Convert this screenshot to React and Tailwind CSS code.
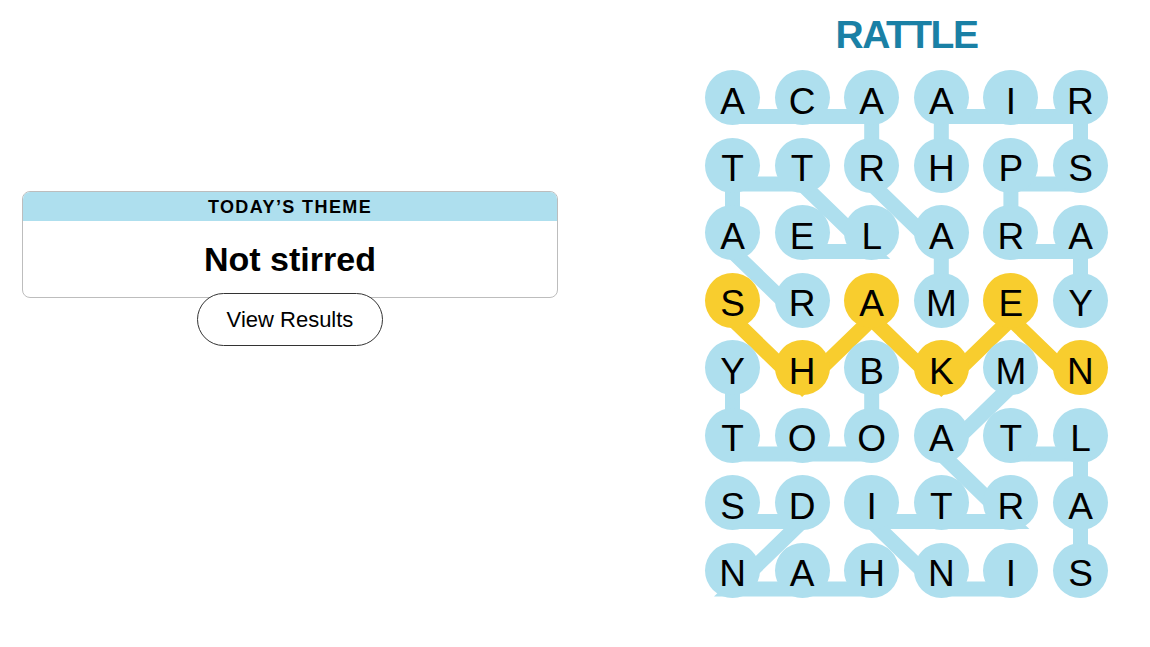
import React from 'react';

const BLUE = '#aedfee';
const YELLOW = '#f8cd2e';

const letters = [
  'ACAAIR',
  'TTRHPS',
  'AELARA',
  'SRAMEY',
  'YHBKMN',
  'TOOATL',
  'SDITRA',
  'NAHNIS',
];

// words as [col,row] chains
const words = [
  { cells: [[3, 3], [3, 2], [2, 1], [2, 0], [1, 0], [0, 0]] },
  { cells: [[3, 1], [3, 0], [4, 0], [5, 0], [5, 1], [4, 1], [4, 2], [5, 2], [5, 3]] },
  { cells: [[1, 3], [0, 2], [0, 1], [1, 1], [2, 2], [1, 2]] },
  { cells: [[2, 4], [2, 5], [1, 5], [0, 5], [0, 4]] },
  { cells: [[4, 4], [3, 5], [4, 6], [3, 6], [2, 6], [3, 7], [4, 7]] },
  { cells: [[5, 7], [5, 6], [5, 5], [4, 5]] },
  { cells: [[2, 7], [1, 7], [0, 7], [1, 6], [0, 6]] },
  { cells: [[0, 3], [1, 4], [2, 3], [3, 4], [4, 3], [5, 4]], spangram: true },
];

const spanCells = new Set(words.find((w) => w.spangram).cells.map(([c, r]) => `${c}-${r}`));

const px = (c) => 27.5 + c * 69.6;
const py = (r) => 27.5 + r * 67.5 + 19;

function Board() {
  return (
    <div className="relative">
      <svg className="absolute left-0 top-0 overflow-visible" width="403" height="528">
        {words.map((w, i) => (
          <polyline
            key={i}
            points={w.cells.map(([c, r]) => `${px(c)},${py(r)}`).join(' ')}
            fill="none"
            stroke={w.spangram ? YELLOW : BLUE}
            strokeWidth="15"
            strokeLinejoin="miter"
            strokeLinecap="butt"
          />
        ))}
      </svg>
      <div className="relative grid grid-cols-[repeat(6,55px)] gap-x-[14.6px] gap-y-[12.5px]">
        {letters.map((row, r) =>
          row.split('').map((ch, c) => (
            <div
              key={`${c}-${r}`}
              className={`flex h-[55px] w-[55px] items-center justify-center rounded-full pt-[7px] text-[37px] leading-none text-black ${
                spanCells.has(`${c}-${r}`) ? 'bg-[#f8cd2e]' : 'bg-[#aedfee]'
              }`}
            >
              {ch}
            </div>
          ))
        )}
      </div>
    </div>
  );
}

export default function App() {
  return (
    <div className="flex min-h-[647px] w-[1150px] bg-white font-['Liberation_Sans',Arial,sans-serif] text-black">
      <div className="w-[705px] shrink-0 pl-[22px] pt-[191px]">
        <div className="w-[536px]">
          <div className="overflow-hidden rounded-[8px] border border-[#bdbdbd]">
            <div className="-mx-px -mt-px h-[30px] bg-[#aedfee] pt-[1px] text-center text-[18px] font-bold leading-[30px] tracking-[1.4px]">
              TODAY’S THEME
            </div>
            <div className="flex h-[76px] items-center justify-center text-[34px] font-bold">
              Not stirred
            </div>
          </div>
          <button className="relative mx-auto -mt-[5px] flex h-[53px] w-[186px] items-center justify-center rounded-full border border-[#333] bg-white text-[22px]">
            View Results
          </button>
        </div>
      </div>
      <div className="flex w-[403px] flex-col items-center pt-[15px]">
        <div className="h-[39px] text-[39px] font-bold leading-none tracking-[-1.5px] text-[#1a80a5]">
          RATTLE
        </div>
        <div className="mt-[16px]">
          <Board />
        </div>
      </div>
    </div>
  );
}
